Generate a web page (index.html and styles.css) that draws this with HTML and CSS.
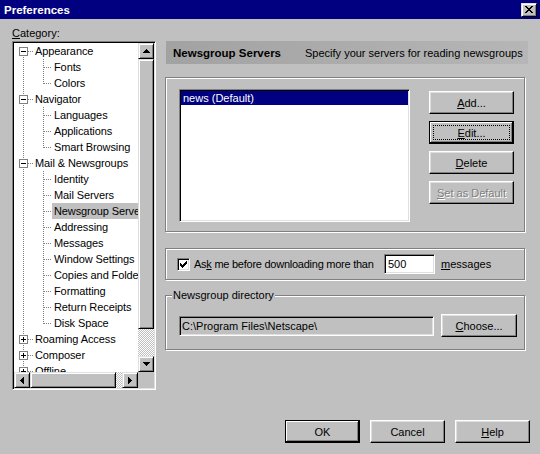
FILE: index.html
```html
<!DOCTYPE html>
<html>
<head>
<meta charset="utf-8">
<title>Preferences</title>
<link rel="stylesheet" href="styles.css">
</head>
<body>
<div class="window">
  <div class="titlebar">
    <span class="title">Preferences</span>
    <span class="closebtn raised"><svg width="8" height="7" viewBox="0 0 8 7"><path d="M0 0h2v1H0z M6 0h2v1H6z M1 1h2v1H1z M5 1h2v1H5z M2 2h4v1H2z M3 3h2v1H3z M2 4h4v1H2z M1 5h2v1H1z M5 5h2v1H5z M0 6h2v1H0z M6 6h2v1H6z"/></svg></span>
  </div>

  <div class="main">
    <div class="leftcol">
      <div class="catlabel"><u>C</u>ategory:</div>
      <div class="tree sunken">
        <div class="treepane">
          <div class="row n0 first"><span class="box minus"></span><span class="lbl l0">Appearance</span></div>
          <div class="row n1"><span class="lbl l1">Fonts</span></div>
          <div class="row n1 last"><span class="lbl l1">Colors</span></div>
          <div class="row n0"><span class="box minus"></span><span class="lbl l0">Navigator</span></div>
          <div class="row n1"><span class="lbl l1">Languages</span></div>
          <div class="row n1"><span class="lbl l1">Applications</span></div>
          <div class="row n1 last"><span class="lbl l1">Smart Browsing</span></div>
          <div class="row n0"><span class="box minus"></span><span class="lbl l0">Mail &amp; Newsgroups</span></div>
          <div class="row n1"><span class="lbl l1">Identity</span></div>
          <div class="row n1"><span class="lbl l1">Mail Servers</span></div>
          <div class="row n1"><span class="lbl l1 sel">Newsgroup Servers</span></div>
          <div class="row n1"><span class="lbl l1">Addressing</span></div>
          <div class="row n1"><span class="lbl l1">Messages</span></div>
          <div class="row n1"><span class="lbl l1">Window Settings</span></div>
          <div class="row n1"><span class="lbl l1">Copies and Folders</span></div>
          <div class="row n1"><span class="lbl l1">Formatting</span></div>
          <div class="row n1"><span class="lbl l1">Return Receipts</span></div>
          <div class="row n1 last"><span class="lbl l1">Disk Space</span></div>
          <div class="row n0"><span class="box plus"></span><span class="lbl l0">Roaming Access</span></div>
          <div class="row n0"><span class="box plus"></span><span class="lbl l0">Composer</span></div>
          <div class="row n0"><span class="box plus"></span><span class="lbl l0">Offline</span></div>
        </div>
        <div class="vscroll">
          <span class="sbtn raised"><svg width="7" height="4" viewBox="0 0 7 4"><path d="M3 0h1v1h1v1h1v1h1v1H0V3h1V2h1V1h1z"/></svg></span>
          <span class="vthumb raised"></span>
          <span class="track"></span>
          <span class="sbtn raised"><svg width="7" height="4" viewBox="0 0 7 4"><path d="M0 0h7v1h-1v1h-1v1h-1v1h-1v-1h-1v-1h-1v-1h-1z"/></svg></span>
        </div>
        <div class="hscroll">
          <span class="sbtn raised"><svg width="4" height="7" viewBox="0 0 4 7"><path d="M0 3h1v-1h1v-1h1v-1h1v7h-1v-1h-1v-1h-1v-1h-1z"/></svg></span>
          <span class="hthumb raised"></span>
          <span class="track"></span>
          <span class="sbtn raised"><svg width="4" height="7" viewBox="0 0 4 7"><path d="M0 0h1v1h1v1h1v1h1v1h-1v1h-1v1h-1v1h-1z"/></svg></span>
        </div>
        <div class="corner"></div>
      </div>
    </div>

    <div class="rightcol">
      <div class="header">
        <span class="htitle">Newsgroup Servers</span>
        <span class="hdesc">Specify your servers for reading newsgroups</span>
      </div>

      <div class="group g1">
        <div class="listbox sunken">
          <div class="item selitem">news (Default)</div>
        </div>
        <div class="btncol">
          <span class="btn wide"><u>A</u>dd...</span>
          <span class="btn wide focused"><span class="focusrect"><u>E</u>dit...</span></span>
          <span class="btn wide"><u>D</u>elete</span>
          <span class="btn wide disabled"><u>S</u>et as Default</span>
        </div>
      </div>

      <div class="group g2">
        <span class="check sunken"><svg width="7" height="7" viewBox="0 0 7 7"><path d="M6 0h1v1H6z M5 1h2v1H5z M0 2h1v1H0z M4 2h3v1H4z M0 3h2v1H0z M3 3h3v1H3z M0 4h5v1H0z M1 5h3v1H1z M2 6h1v1H2z"/></svg></span>
        <span class="asklabel">As<u>k</u> me before downloading more than</span>
        <span class="numfield sunken">500</span>
        <span class="msgs"><u>m</u>essages</span>
      </div>

      <div class="group g3">
        <span class="legend">Newsgroup directory</span>
        <div class="dirrow">
          <span class="pathfield sunken">C:\Program Files\Netscape\</span>
          <span class="btn choose"><u>C</u>hoose...</span>
        </div>
      </div>
    </div>
  </div>

  <div class="footer">
    <span class="btn std default">OK</span>
    <span class="btn std">Cancel</span>
    <span class="btn std"><u>H</u>elp</span>
  </div>
</div>
</body>
</html>
```

FILE: styles.css
```css
:root {
  --dv: repeating-linear-gradient(to bottom, #808080 0 1px, transparent 1px 2px);
  --dh: repeating-linear-gradient(to right, #808080 0 1px, transparent 1px 2px);
}
* { box-sizing: border-box; }
html, body { margin: 0; padding: 0; }
body {
  width: 540px;
  height: 454px;
  overflow: hidden;
  background: #c0c0c0;
  font-family: "Liberation Sans", Arial, sans-serif;
  font-size: 11px;
  color: #000;
}
u { text-decoration: underline; text-underline-offset: 1px; }

.window { display: flex; flex-direction: column; height: 454px; }

.raised {
  border: 1px solid;
  border-color: #dfdfdf #000 #000 #dfdfdf;
  box-shadow: inset 1px 1px #fff, inset -1px -1px #808080;
  background: #c0c0c0;
}
.sunken {
  border: 1px solid;
  border-color: #808080 #fff #fff #808080;
  padding: 1px;
  box-shadow: inset 1px 1px #000, inset -1px -1px #dfdfdf;
}

/* title bar */
.titlebar {
  height: 19px;
  flex: none;
  background: #000080;
  display: flex;
  align-items: center;
  justify-content: space-between;
  padding: 0 3px 0 4px;
}
.title { color: #fff; font-weight: bold; font-size: 11.5px; }
.closebtn {
  width: 16px; height: 14px;
  display: flex; align-items: center; justify-content: center;
}

/* main area */
.main { display: flex; gap: 9px; padding: 8px 0 0 12px; }
.leftcol { width: 144px; flex: none; }
.catlabel { height: 14px; line-height: 13px; }

.tree {
  width: 144px;
  height: 349px;
  background: #fff;
  display: grid;
  grid-template-columns: 124px 16px;
  grid-template-rows: 329px 16px;
}
.treepane { overflow: hidden; }
.row {
  height: 16px;
  display: flex;
  align-items: flex-start;
  white-space: nowrap;
  background-repeat: no-repeat;
}
.n0 {
  background-image: var(--dv), var(--dh);
  background-position: 9px 0, 14px 8px;
  background-size: 1px 16px, 5px 1px;
}
.n0.first {
  background-position: 9px 8px, 14px 8px;
  background-size: 1px 8px, 5px 1px;
}
.n1 {
  background-image: var(--dv), var(--dv), var(--dh);
  background-position: 9px 0, 29px 0, 30px 8px;
  background-size: 1px 16px, 1px 16px, 8px 1px;
}
.n1.last { background-size: 1px 16px, 1px 9px, 8px 1px; }

.box {
  flex: none;
  width: 9px; height: 9px;
  margin: 4px 0 0 5px;
  border: 1px solid #808080;
  background-color: #fff;
  background-repeat: no-repeat;
}
.minus {
  background-image: linear-gradient(#000, #000);
  background-position: 1px 3px;
  background-size: 5px 1px;
}
.plus {
  background-image: linear-gradient(#000, #000), linear-gradient(#000, #000);
  background-position: 1px 3px, 3px 1px;
  background-size: 5px 1px, 1px 5px;
}
.lbl { line-height: 16px; padding: 0 2px; letter-spacing: -0.1px; }
.l0 { margin-left: 5px; }
.l1 { margin-left: 38px; }
.sel { background: #c0c0c0; }

.vscroll { display: flex; flex-direction: column; }
.hscroll { display: flex; }
.sbtn {
  width: 16px; height: 16px; flex: none;
  display: flex; align-items: center; justify-content: center;
}
.vthumb { height: 270px; flex: none; }
.hthumb { width: 86px; flex: none; }
.track {
  flex: 1;
  background: repeating-conic-gradient(#fff 0 25%, #c0c0c0 0 50%) 0 0 / 2px 2px;
}
.corner { background: #c0c0c0; }

/* right column */
.rightcol { width: 363px; flex: none; padding-top: 14px; display: flex; flex-direction: column; }
.header {
  margin-left: 1px;
  width: 362px;
  height: 23px;
  display: flex;
  align-items: center;
  padding-left: 7px;
  background: linear-gradient(90deg, #a2a2a2, #b6b6b6);
}
.htitle { width: 132px; font-weight: bold; font-size: 11.5px; flex: none; }
.hdesc { white-space: nowrap; }

.group {
  width: 360px;
  border: 1px solid #808080;
  box-shadow: inset 1px 1px #fff, 1px 1px #fff;
}
.g1 {
  margin-top: 13px;
  height: 155px;
  display: flex;
  align-items: flex-start;
  padding: 11px 0 0 13px;
  gap: 19px;
}
.listbox { width: 231px; height: 133px; background: #fff; }
.item { height: 14px; line-height: 14px; padding-left: 2px; white-space: nowrap; }
.selitem { background: #000080; color: #fff; }
.btncol { display: flex; flex-direction: column; gap: 7px; margin-top: 2px; }

.btn {
  height: 23px;
  display: flex;
  align-items: center;
  justify-content: center;
  border: 1px solid;
  border-color: #fff #000 #000 #fff;
  box-shadow: inset -1px -1px #808080, inset 1px 1px #dfdfdf;
  background: #c0c0c0;
  white-space: nowrap;
}
.wide { width: 85px; }
.std { width: 75px; }
.choose { width: 76px; }
.default, .focused {
  border-color: #000;
  box-shadow: inset -1px -1px #000, inset 1px 1px #fff, inset -2px -2px #808080;
}
.focused { padding: 3px; }
.focusrect {
  flex: 1;
  align-self: stretch;
  border: 1px dotted #000;
  display: flex;
  align-items: center;
  justify-content: center;
}
.disabled { color: #808080; text-shadow: 1px 1px #fff; }

.g2 {
  margin-top: 16px;
  height: 32px;
  display: flex;
  align-items: center;
  padding-left: 11px;
}
.check {
  width: 13px; height: 13px; flex: none;
  background: #fff;
  display: flex; align-items: center; justify-content: center;
}
.asklabel { width: 190px; margin-left: 4px; white-space: nowrap; letter-spacing: -0.25px; }
.numfield {
  width: 51px; height: 20px;
  background: #fff;
  padding-left: 3px;
  line-height: 16px;
}
.msgs { margin-left: 6px; }

.g3 {
  margin-top: 15px;
  height: 55px;
  display: flex;
  flex-direction: column;
  padding-left: 13px;
}
.legend {
  align-self: flex-start;
  margin: -7px 0 0 -7px;
  padding: 0 1px;
  line-height: 13px;
  background: #c0c0c0;
}
.dirrow { display: flex; align-items: center; gap: 7px; margin-top: 12px; height: 23px; }
.pathfield {
  width: 255px; height: 20px;
  background: #c0c0c0;
  padding-left: 2px;
  line-height: 16px;
  white-space: nowrap;
}

.footer {
  margin-top: auto;
  display: flex;
  justify-content: flex-end;
  gap: 10px;
  padding: 0 10px 11px 0;
}
```
